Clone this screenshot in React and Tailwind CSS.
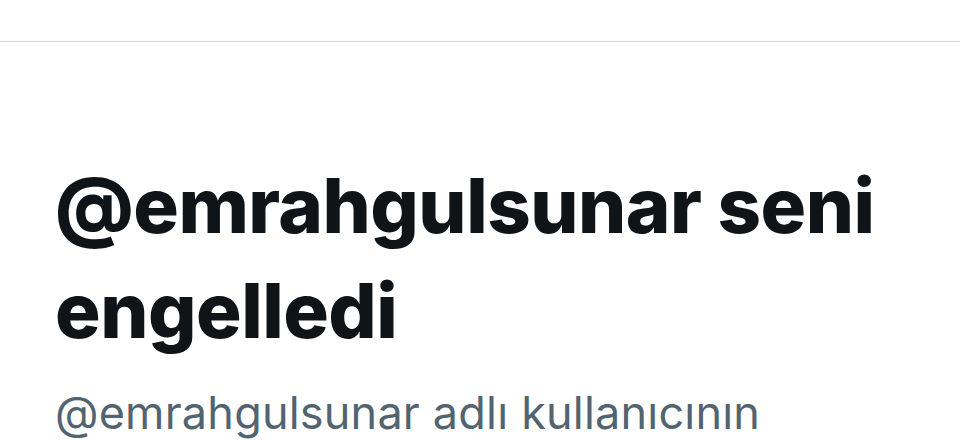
export default function App() {
    return (
        <div className="w-[960px] h-[440px] overflow-hidden bg-white" style={{ fontFamily: 'Inter, "Liberation Sans", sans-serif' }}>
            {/* Top bar */}
            <div className="h-[42px] border-b border-[#d4d4d4]"></div>

            {/* Blocked notice */}
            <div className="px-[55px] pt-[111px]">
                <h1 className="text-[76px] leading-[105px] font-extrabold text-[#0f1419] tracking-[-0.5px]">
                    @emrahgulsunar seni engelledi
                </h1>
                <p className="mt-[23px] text-[45px] leading-[54px] text-[#536471] tracking-[0.2px]">
                    @emrahgulsunar adlı kullanıcının
                </p>
            </div>
        </div>
    );
}
